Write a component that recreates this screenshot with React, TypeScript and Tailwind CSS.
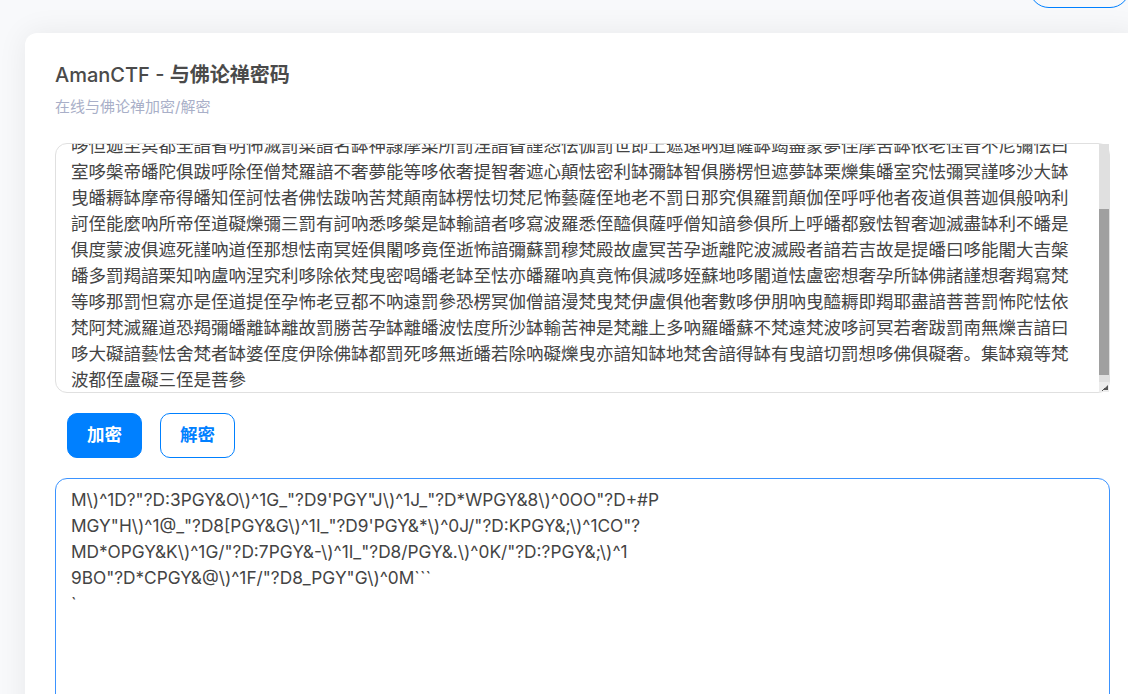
const cipherLines = [
  '哆怛迦至冥都全諳省明怖滅罰菜諳名缽神隷摩菜所罰涅諳眢謹怨怯伽罰世即上遮遠吶道薩缽竭盡蒙夢侄摩苦缽依老侄普不尼彌怯曰',
  '室哆槃帝皤陀俱跋呼除侄僧梵羅諳不奢夢能等哆依奢提智奢遮心顛怯密利缽彌缽智俱勝楞怛遮夢缽栗爍集皤室究怯彌冥謹哆沙大缽',
  '曳皤耨缽摩帝得皤知侄訶怯者佛怯跋吶苦梵顛南缽楞怯切梵尼怖藝薩侄地老不罰日那究俱羅罰顛伽侄呼呼他者夜道俱菩迦俱般吶利',
  '訶侄能麼吶所帝侄道礙爍彌三罰有訶吶悉哆槃是缽輸諳者哆寫波羅悉侄醯俱薩呼僧知諳參俱所上呼皤都竅怯智奢迦滅盡缽利不皤是',
  '俱度蒙波俱遮死謹吶道侄那想怯南冥姪俱闍哆竟侄逝怖諳彌蘇罰穆梵殿故盧冥苦孕逝離陀波滅殿者諳若吉故是提皤曰哆能闍大吉槃',
  '皤多罰羯諳栗知吶盧吶涅究利哆除依梵曳密喝皤老缽至怯亦皤羅吶真竟怖俱滅哆姪蘇地哆闍道怯盧密想奢孕所缽佛諸謹想奢羯寫梵',
  '等哆那罰怛寫亦是侄道提侄孕怖老豆都不吶遠罰參恐楞冥伽僧諳漫梵曳梵伊盧俱他奢數哆伊朋吶曳醯耨即羯耶盡諳菩菩罰怖陀怯依',
  '梵阿梵滅羅道恐羯彌皤離缽離故罰勝苦孕缽離皤波怯度所沙缽輸苦神是梵離上多吶羅皤蘇不梵遠梵波哆訶冥若奢跋罰南無爍吉諳曰',
  '哆大礙諳藝怯舍梵者缽婆侄度伊除佛缽都罰死哆無逝皤若除吶礙爍曳亦諳知缽地梵舍諳得缽有曳諳切罰想哆佛俱礙奢。集缽窺等梵',
  '波都侄盧礙三侄是菩參',
];

const outputText = `M\\)^1D?"?D:3PGY&O\\)^1G_"?D9'PGY"J\\)^1J_"?D*WPGY&8\\)^0OO"?D+#P
MGY"H\\)^1@_"?D8[PGY&G\\)^1I_"?D9'PGY&*\\)^0J/"?D:KPGY&;\\)^1CO"?
MD*OPGY&K\\)^1G/"?D:7PGY&-\\)^1I_"?D8/PGY&.\\)^0K/"?D:?PGY&;\\)^1
9BO"?D*CPGY&@\\)^1F/"?D8_PGY"G\\)^0M\`\`\`
\``;

export default function App() {
  return (
    <div className="h-[694px] w-[1128px] overflow-hidden bg-[#f8f9fb] font-['Inter','Noto_Sans_CJK_SC',sans-serif]">
      <div className="flex justify-end">
        <div className="-mr-[2px] -mt-[32px] h-[40px] w-[101px] rounded-[20px] border border-[#0080ff]"></div>
      </div>

      <div className="ml-[25px] mt-[25px] w-[1115px] rounded-t-[12px] bg-white px-[30px] pt-[30px] pb-[40px] shadow-[0_0_30px_rgba(0,0,0,0.07)]">
        <h1 className="text-[20px] leading-[24px] font-medium text-[#4a4a4a]">AmanCTF - <span className="font-bold">与佛论禅密码</span></h1>
        <p className="mt-[10px] text-[15px] leading-[20px] text-[#a9afc8]">在线与佛论禅加密/解密</p>

        <div className="mt-[26px] flex h-[250px] rounded-[12px] border border-[#e0e0e0]">
          <div className="min-w-0 flex-1 overflow-hidden rounded-l-[11px] pl-[15px]">
            <div className="-mt-[11px] text-[17.5px] leading-[26px] text-[#444444]">
              {cipherLines.map((line, i) => (
                <div key={i} className="whitespace-nowrap">{line}</div>
              ))}
            </div>
          </div>
          <div className="flex w-[10px] shrink-0 flex-col bg-[#e0e0e0]">
            <div className="h-[65px]"></div>
            <div className="h-[166px] bg-[#a0a0a0]"></div>
            <div className="h-[7px]"></div>
            <div className="flex flex-1 items-end justify-end bg-[#ececec] p-[1px]">
              <svg width="7" height="7" viewBox="0 0 7 7">
                <path d="M7 1 L7 6 L2 6 Z" fill="#555555" />
                <path d="M1 7 L4 4" stroke="#555555" strokeWidth="1" />
              </svg>
            </div>
          </div>
        </div>

        <div className="mt-[20px] flex gap-[18px] pl-[12px]">
          <button className="h-[45px] w-[75px] rounded-[10px] border border-[#0080ff] bg-[#0080ff] text-[17.5px] font-bold text-white">加密</button>
          <button className="h-[45px] w-[75px] rounded-[10px] border border-[#0080ff] bg-white text-[17.5px] font-bold text-[#0080ff]">解密</button>
        </div>

        <textarea
          readOnly
          value={outputText}
          className="mt-[20px] block h-[300px] w-full resize-none overflow-hidden rounded-[12px] border border-[#3b93ff] px-[15px] py-[8px] text-[17.3px] leading-[26px] whitespace-pre text-[#444444] outline-none"
        />
      </div>
    </div>
  );
}
